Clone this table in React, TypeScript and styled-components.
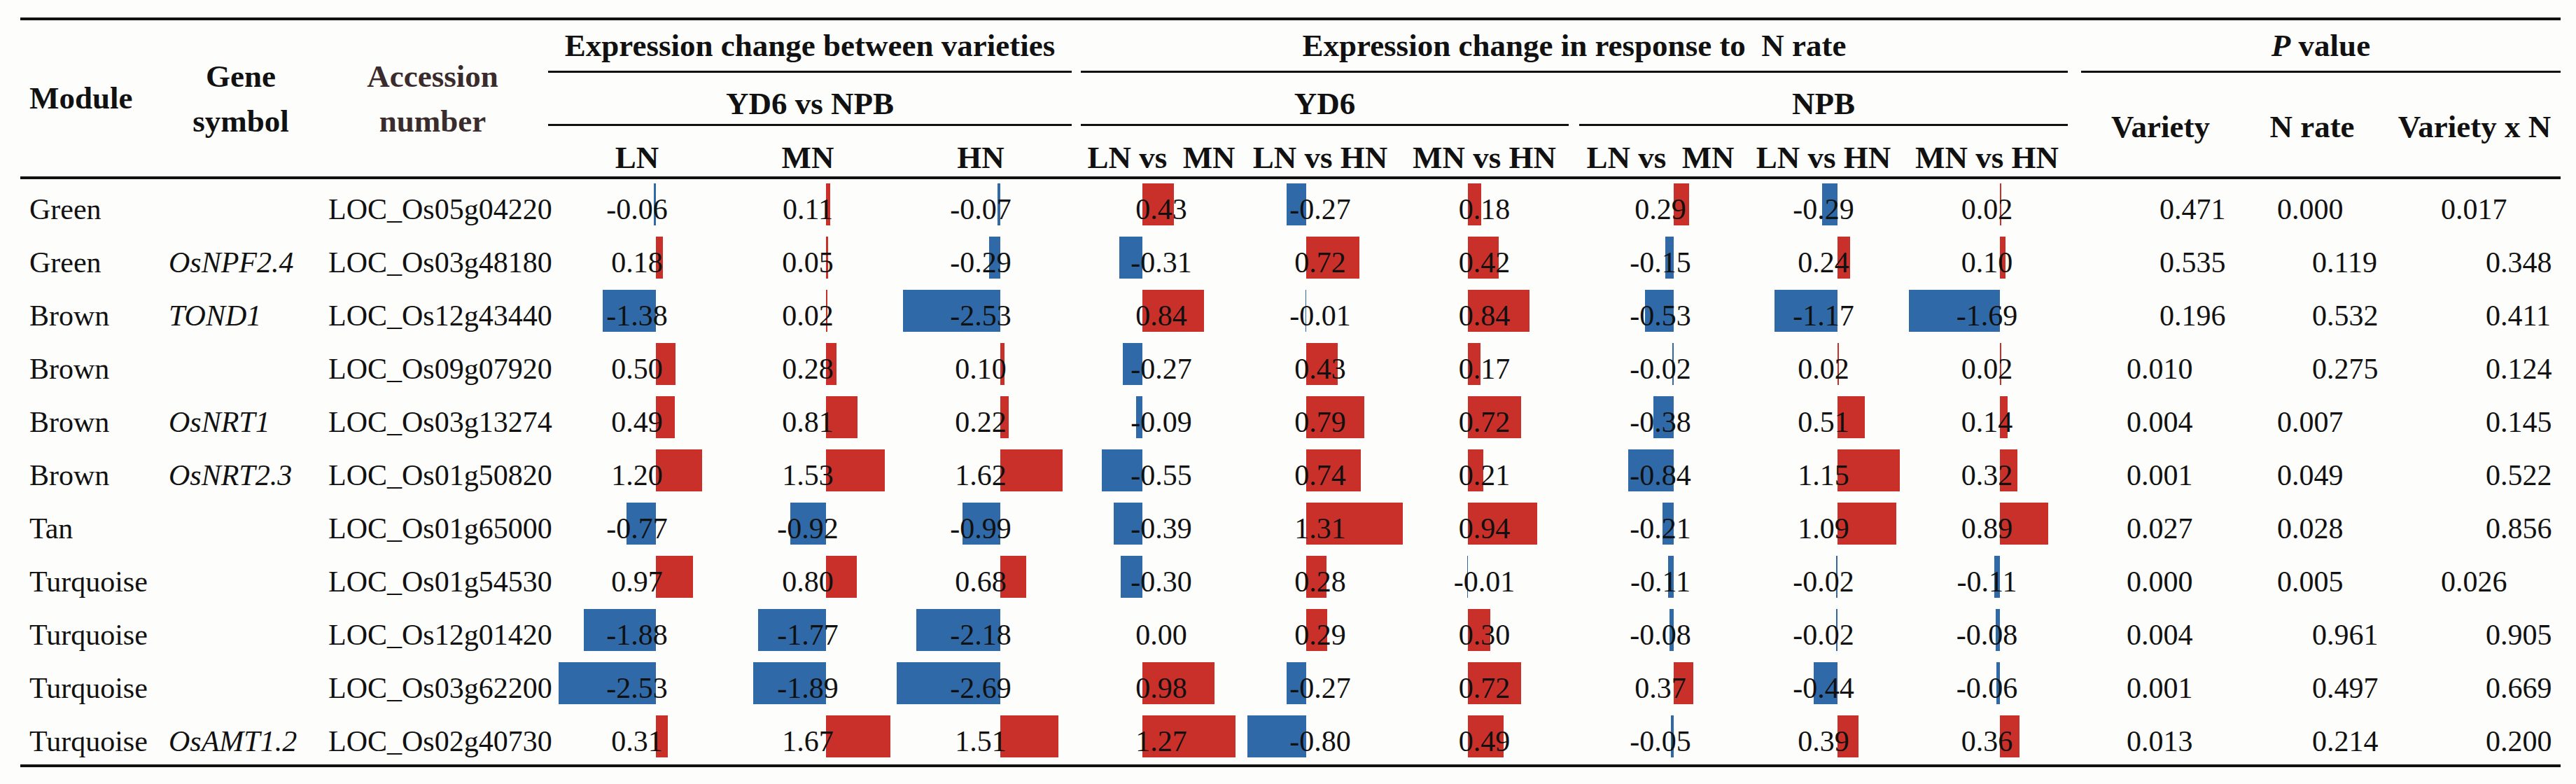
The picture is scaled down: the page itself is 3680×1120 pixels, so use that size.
import React from 'react'
import styled, { createGlobalStyle } from 'styled-components'

const COLS =
  '200px 230px 318px 266px 222px 272px 244px 210px 259px 244px 222px 245px 251px 182px 264px'

const GlobalStyle = createGlobalStyle`
  body {
    margin: 0;
    background: #fdfdfc;
    font-family: "Liberation Serif", "Times New Roman", serif;
    color: #111;
  }
`

const Page = styled.div`
  padding: 25px 0 0 29px;
  width: 3629px;
`

const Table = styled.div`
  width: 3629px;
  border-top: 4px solid #111;
  border-bottom: 4px solid #111;
`

const Head = styled.div`
  display: grid;
  grid-template-columns: ${COLS};
  grid-template-rows: 75px 76px 72px;
  border-bottom: 4px solid #111;
  font-size: 45px;
  font-weight: 700;
  line-height: 45px;
`

const HeadCell = styled.div<{
  $col: number
  $span?: number
  $row: number
  $rows?: number
  $rule?: boolean
  $inset?: string
  $v?: 'center' | 'end'
  $pad?: string
  $justify?: string
}>`
  grid-column: ${(p) => p.$col} / span ${(p) => p.$span ?? 1};
  grid-row: ${(p) => p.$row} / span ${(p) => p.$rows ?? 1};
  display: flex;
  flex-direction: column;
  justify-content: ${(p) => (p.$v === 'end' ? 'flex-end' : 'center')};
  align-items: ${(p) => p.$justify ?? 'center'};
  margin: ${(p) => p.$inset ?? '0'};
  padding: ${(p) => p.$pad ?? '0'};
  border-bottom: ${(p) => (p.$rule ? '3px solid #111' : 'none')};
  white-space: pre;
`

const TwoLine = styled.span<{ $tint?: boolean }>`
  display: block;
  text-align: center;
  line-height: 64px;
  color: ${(p) => (p.$tint ? '#3a2c2c' : '#111')};
`

const Row = styled.div`
  display: grid;
  grid-template-columns: ${COLS};
  height: 76px;
  font-size: 42px;
  line-height: 42px;
`

const TextCell = styled.div<{ $pad: number; $italic?: boolean }>`
  padding: 22px 0 0 ${(p) => p.$pad}px;
  font-style: ${(p) => (p.$italic ? 'italic' : 'normal')};
  white-space: nowrap;
`

const BarCell = styled.div`
  position: relative;
  padding-top: 22px;
  text-align: center;
  white-space: nowrap;
`

const Bar = styled.div<{ $neg: boolean }>`
  position: absolute;
  top: 6px;
  height: 60px;
  background: ${(p) => (p.$neg ? '#2f69a8' : '#c9302a')};
`

const Value = styled.span`
  position: relative;
`

const PCell = styled.div<{ $pad: number }>`
  padding: 22px 0 0 ${(p) => p.$pad}px;
  white-space: nowrap;
`

// axis offset from cell left and pixels per unit, per bar column
const BAR_COLS = [
  { axis: 160, scale: 55 },
  { axis: 137, scale: 55 },
  { axis: 164, scale: 55 },
  { axis: 95, scale: 105 },
  { axis: 85, scale: 105 },
  { axis: 106, scale: 105 },
  { axis: 141, scale: 77 },
  { axis: 131, scale: 77 },
  { axis: 141, scale: 77 },
]

type Gene = {
  module: string
  symbol: string
  acc: string
  vals: string[]
  p: [string, string, string]
  pPad: [number, number, number]
}

const rows: Gene[] = [
  { module: 'Green', symbol: '', acc: 'LOC_Os05g04220', vals: ['-0.06', '0.11', '-0.07', '0.43', '-0.27', '0.18', '0.29', '-0.29', '0.02'], p: ['0.471', '0.000', '0.017'], pPad: [124, 41, 93] },
  { module: 'Green', symbol: 'OsNPF2.4', acc: 'LOC_Os03g48180', vals: ['0.18', '0.05', '-0.29', '-0.31', '0.72', '0.42', '-0.15', '0.24', '0.10'], p: ['0.535', '0.119', '0.348'], pPad: [124, 91, 157] },
  { module: 'Brown', symbol: 'TOND1', acc: 'LOC_Os12g43440', vals: ['-1.38', '0.02', '-2.53', '0.84', '-0.01', '0.84', '-0.53', '-1.17', '-1.69'], p: ['0.196', '0.532', '0.411'], pPad: [124, 91, 157] },
  { module: 'Brown', symbol: '', acc: 'LOC_Os09g07920', vals: ['0.50', '0.28', '0.10', '-0.27', '0.43', '0.17', '-0.02', '0.02', '0.02'], p: ['0.010', '0.275', '0.124'], pPad: [77, 91, 157] },
  { module: 'Brown', symbol: 'OsNRT1', acc: 'LOC_Os03g13274', vals: ['0.49', '0.81', '0.22', '-0.09', '0.79', '0.72', '-0.38', '0.51', '0.14'], p: ['0.004', '0.007', '0.145'], pPad: [77, 41, 157] },
  { module: 'Brown', symbol: 'OsNRT2.3', acc: 'LOC_Os01g50820', vals: ['1.20', '1.53', '1.62', '-0.55', '0.74', '0.21', '-0.84', '1.15', '0.32'], p: ['0.001', '0.049', '0.522'], pPad: [77, 41, 157] },
  { module: 'Tan', symbol: '', acc: 'LOC_Os01g65000', vals: ['-0.77', '-0.92', '-0.99', '-0.39', '1.31', '0.94', '-0.21', '1.09', '0.89'], p: ['0.027', '0.028', '0.856'], pPad: [77, 41, 157] },
  { module: 'Turquoise', symbol: '', acc: 'LOC_Os01g54530', vals: ['0.97', '0.80', '0.68', '-0.30', '0.28', '-0.01', '-0.11', '-0.02', '-0.11'], p: ['0.000', '0.005', '0.026'], pPad: [77, 41, 93] },
  { module: 'Turquoise', symbol: '', acc: 'LOC_Os12g01420', vals: ['-1.88', '-1.77', '-2.18', '0.00', '0.29', '0.30', '-0.08', '-0.02', '-0.08'], p: ['0.004', '0.961', '0.905'], pPad: [77, 91, 157] },
  { module: 'Turquoise', symbol: '', acc: 'LOC_Os03g62200', vals: ['-2.53', '-1.89', '-2.69', '0.98', '-0.27', '0.72', '0.37', '-0.44', '-0.06'], p: ['0.001', '0.497', '0.669'], pPad: [77, 91, 157] },
  { module: 'Turquoise', symbol: 'OsAMT1.2', acc: 'LOC_Os02g40730', vals: ['0.31', '1.67', '1.51', '1.27', '-0.80', '0.49', '-0.05', '0.39', '0.36'], p: ['0.013', '0.214', '0.200'], pPad: [77, 91, 157] },
]

const subLabels = ['LN', 'MN', 'HN', 'LN vs  MN', 'LN vs HN', 'MN vs HN', 'LN vs  MN', 'LN vs HN', 'MN vs HN']

const DataBar = ({ value, col }: { value: string; col: number }) => {
  const v = parseFloat(value)
  const { axis, scale } = BAR_COLS[col]
  const w = Math.abs(v) * scale
  const neg = v < 0
  return (
    <BarCell>
      {w > 0.5 && (
        <Bar $neg={neg} style={{ left: neg ? axis - w : axis, width: Math.max(w, 1.5) }} />
      )}
      <Value>{value}</Value>
    </BarCell>
  )
}

export default function App() {
  return (
    <Page>
      <GlobalStyle />
      <Table>
        <Head>
          <HeadCell $col={1} $row={1} $rows={3} $justify="flex-start" $pad="0 0 0 13px">
            Module
          </HeadCell>
          <HeadCell $col={2} $row={1} $rows={3}>
            <TwoLine>Gene</TwoLine>
            <TwoLine>symbol</TwoLine>
          </HeadCell>
          <HeadCell $col={3} $row={1} $rows={3}>
            <TwoLine $tint>Accession</TwoLine>
            <TwoLine $tint>number</TwoLine>
          </HeadCell>

          <HeadCell $col={4} $span={3} $row={1} $rule $inset="0 6px">
            Expression change between varieties
          </HeadCell>
          <HeadCell $col={7} $span={6} $row={1} $rule $inset="0 7px">
            {'Expression change in response to  N rate'}
          </HeadCell>
          <HeadCell $col={13} $span={3} $row={1} $rule $inset="0 0 0 12px">
            <span>
              <i>P</i> value
            </span>
          </HeadCell>

          <HeadCell $col={4} $span={3} $row={2} $rule $inset="0 6px" $v="end" $pad="0 0 6px">
            YD6 vs NPB
          </HeadCell>
          <HeadCell $col={7} $span={3} $row={2} $rule $inset="0 9px 0 7px" $v="end" $pad="0 0 6px">
            YD6
          </HeadCell>
          <HeadCell $col={10} $span={3} $row={2} $rule $inset="0 7px 0 6px" $v="end" $pad="0 0 6px">
            NPB
          </HeadCell>

          <HeadCell $col={13} $row={2} $rows={2} $pad="7px 0 0">
            Variety
          </HeadCell>
          <HeadCell $col={14} $row={2} $rows={2} $pad="7px 0 0">
            N rate
          </HeadCell>
          <HeadCell $col={15} $row={2} $rows={2} $pad="7px 0 0 18px">
            Variety x N
          </HeadCell>

          {subLabels.map((label, i) => (
            <HeadCell key={i} $col={4 + i} $row={3} $v="end" $pad="0 0 4px">
              {label}
            </HeadCell>
          ))}
        </Head>

        {rows.map((r, i) => (
          <Row key={i}>
            <TextCell $pad={13}>{r.module}</TextCell>
            <TextCell $pad={12} $italic>
              {r.symbol}
            </TextCell>
            <TextCell $pad={10}>{r.acc}</TextCell>
            {r.vals.map((v, j) => (
              <DataBar key={j} value={v} col={j} />
            ))}
            {r.p.map((p, j) => (
              <PCell key={j} $pad={r.pPad[j]}>
                {p}
              </PCell>
            ))}
          </Row>
        ))}
      </Table>
    </Page>
  )
}
